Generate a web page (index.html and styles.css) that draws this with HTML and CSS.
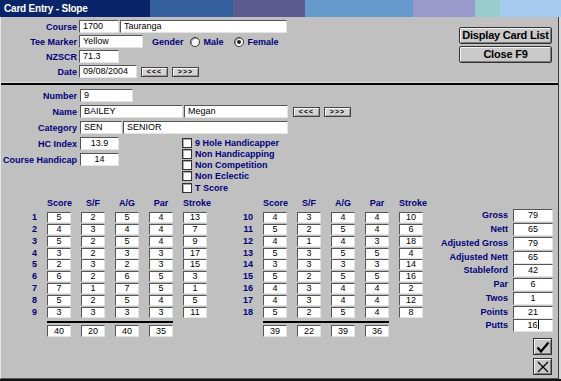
FILE: index.html
```html
<!DOCTYPE html>
<html>
<head>
    <link rel="stylesheet" href="styles.css">
</head>
<body>
<div class="window">
    <div class="titlebar">Card Entry - Slope</div>
    <div class="content">

        <div class="top">
            <div class="top-form">
                <div class="row">
                    <span class="lab">Course</span>
                    <span class="field" style="width:40px">1700</span>
                    <span class="field join" style="width:167px">Tauranga</span>
                </div>
                <div class="row">
                    <span class="lab">Tee Marker</span>
                    <span class="field" style="width:64px">Yellow</span>
                    <span class="opt gender">Gender</span>
                    <span class="radio"></span>
                    <span class="opt">Male</span>
                    <span class="radio on"></span>
                    <span class="opt">Female</span>
                </div>
                <div class="row">
                    <span class="lab">NZSCR</span>
                    <span class="field" style="width:40px">71.3</span>
                </div>
                <div class="row">
                    <span class="lab">Date</span>
                    <span class="field" style="width:58px">09/08/2004</span>
                    <span class="mini">&lt;&lt;&lt;</span>
                    <span class="mini">&gt;&gt;&gt;</span>
                </div>
            </div>
            <div class="top-buttons">
                <span class="btn">Display Card List</span>
                <span class="btn">Close F9</span>
            </div>
        </div>

        <div class="player">
            <div class="row">
                <span class="lab wide">Number</span>
                <span class="field" style="width:53px">9</span>
            </div>
            <div class="row">
                <span class="lab wide">Name</span>
                <span class="field" style="width:103px">BAILEY</span>
                <span class="field join" style="width:104px">Megan</span>
                <span class="mini name-btn">&lt;&lt;&lt;</span>
                <span class="mini">&gt;&gt;&gt;</span>
            </div>
            <div class="row">
                <span class="lab wide">Category</span>
                <span class="field" style="width:42px">SEN</span>
                <span class="field join" style="width:165px">SENIOR</span>
            </div>
            <div class="hc-block">
                <div class="hc-rows">
                    <div class="row">
                        <span class="lab wide">HC Index</span>
                        <span class="field center" style="width:39px">13.9</span>
                    </div>
                    <div class="row">
                        <span class="lab wide">Course Handicap</span>
                        <span class="field center" style="width:39px">14</span>
                    </div>
                </div>
                <div class="checks">
                    <div class="check"><span class="cbox"></span>9 Hole Handicapper</div>
                    <div class="check"><span class="cbox"></span>Non Handicapping</div>
                    <div class="check"><span class="cbox"></span>Non Competition</div>
                    <div class="check"><span class="cbox"></span>Non Eclectic</div>
                    <div class="check"><span class="cbox"></span>T Score</div>
                </div>
            </div>
        </div>

        <div class="scores">
            <div class="card">
                <span></span><span class="hd">Score</span><span class="hd">S/F</span><span class="hd">A/G</span><span class="hd">Par</span><span class="hd">Stroke</span>
                <span class="num">1</span><span class="box">5</span><span class="box">2</span><span class="box">5</span><span class="box">4</span><span class="box">13</span>
                <span class="num">2</span><span class="box">4</span><span class="box">3</span><span class="box">4</span><span class="box">4</span><span class="box">7</span>
                <span class="num">3</span><span class="box">5</span><span class="box">2</span><span class="box">5</span><span class="box">4</span><span class="box">9</span>
                <span class="num">4</span><span class="box">3</span><span class="box">2</span><span class="box">3</span><span class="box">3</span><span class="box">17</span>
                <span class="num">5</span><span class="box">2</span><span class="box">3</span><span class="box">2</span><span class="box">3</span><span class="box">15</span>
                <span class="num">6</span><span class="box">6</span><span class="box">2</span><span class="box">6</span><span class="box">5</span><span class="box">3</span>
                <span class="num">7</span><span class="box">7</span><span class="box">1</span><span class="box">7</span><span class="box">5</span><span class="box">1</span>
                <span class="num">8</span><span class="box">5</span><span class="box">2</span><span class="box">5</span><span class="box">4</span><span class="box">5</span>
                <span class="num">9</span><span class="box">3</span><span class="box">3</span><span class="box">3</span><span class="box">3</span><span class="box">11</span>
                <span class="rule"></span>
                <span class="box total first">40</span><span class="box total">20</span><span class="box total">40</span><span class="box total">35</span>
            </div>

            <div class="card back">
                <span></span><span class="hd">Score</span><span class="hd">S/F</span><span class="hd">A/G</span><span class="hd">Par</span><span class="hd">Stroke</span>
                <span class="num">10</span><span class="box">4</span><span class="box">3</span><span class="box">4</span><span class="box">4</span><span class="box">10</span>
                <span class="num">11</span><span class="box">5</span><span class="box">2</span><span class="box">5</span><span class="box">4</span><span class="box">6</span>
                <span class="num">12</span><span class="box">4</span><span class="box">1</span><span class="box">4</span><span class="box">3</span><span class="box">18</span>
                <span class="num">13</span><span class="box">5</span><span class="box">3</span><span class="box">5</span><span class="box">5</span><span class="box">4</span>
                <span class="num">14</span><span class="box">3</span><span class="box">3</span><span class="box">3</span><span class="box">3</span><span class="box">14</span>
                <span class="num">15</span><span class="box">5</span><span class="box">2</span><span class="box">5</span><span class="box">5</span><span class="box">16</span>
                <span class="num">16</span><span class="box">4</span><span class="box">3</span><span class="box">4</span><span class="box">4</span><span class="box">2</span>
                <span class="num">17</span><span class="box">4</span><span class="box">3</span><span class="box">4</span><span class="box">4</span><span class="box">12</span>
                <span class="num">18</span><span class="box">5</span><span class="box">2</span><span class="box">5</span><span class="box">4</span><span class="box">8</span>
                <span class="rule"></span>
                <span class="box total first">39</span><span class="box total">22</span><span class="box total">39</span><span class="box total">36</span>
            </div>

            <div class="summary">
                <div class="stats">
                    <span class="slab">Gross</span><span class="sval">79</span>
                    <span class="slab">Nett</span><span class="sval">65</span>
                    <span class="slab">Adjusted Gross</span><span class="sval">79</span>
                    <span class="slab">Adjusted Nett</span><span class="sval">65</span>
                    <span class="slab">Stableford</span><span class="sval">42</span>
                    <span class="slab">Par</span><span class="sval">6</span>
                    <span class="slab">Twos</span><span class="sval">1</span>
                    <span class="slab">Points</span><span class="sval">21</span>
                    <span class="slab">Putts</span><span class="sval">16<span class="caret"></span></span>
                </div>
                <div class="actions">
                    <span class="icon-btn">
                        <svg width="14" height="12" viewBox="0 0 14 12"><path d="M1.5 6.5 L5 10.5 L12.5 1.5" fill="none" stroke="#000" stroke-width="2.2"/></svg>
                    </span>
                    <span class="icon-btn">
                        <svg width="12" height="12" viewBox="0 0 12 12"><path d="M1 1 L11 11 M11 1 L1 11" fill="none" stroke="#000" stroke-width="1.3"/></svg>
                    </span>
                </div>
            </div>
        </div>

    </div>
</div>
</body>
</html>
```

FILE: styles.css
```css
/* window frame */
* {
    box-sizing: border-box;
}

body {
    margin: 0;
    background: #d6d6d6;
    font-family: "Liberation Sans", Arial, sans-serif;
    font-size: 9px;
}

.window {
    width: 561px;
    height: 381px;
    display: flex;
    flex-direction: column;
    border-bottom: 2px solid #111;
}

.titlebar {
    height: 17px;
    padding: 1px 4px 0;
    line-height: 16px;
    color: #fff;
    font-size: 10px;
    font-weight: bold;
    letter-spacing: -0.2px;
    background: linear-gradient(to right,
        #0a246a 0 150px,
        #33609c 150px 233px,
        #5b5b90 233px 305px,
        #6699cc 305px 413px,
        #9999cc 413px 475px,
        #99cccc 475px 500px,
        #a6caf0 500px);
}

.content {
    flex: 1;
    margin-right: 2px;
    background: #c0c0c0;
    border-left: 1px solid #e6e6e6;
    border-right: 1px solid #3a3a3a;
    border-bottom: 1px solid #5a5a5a;
}

/* common controls */
.row {
    display: flex;
    align-items: center;
    height: 13px;
}

.lab {
    width: 76px;
    margin-right: 2px;
    text-align: right;
    font-weight: bold;
    color: #00007b;
    white-space: nowrap;
}

.lab.wide {
    margin-right: 3px;
}

.field {
    height: 13px;
    padding: 0 3px;
    line-height: 11px;
    background: #fff;
    border: 1px solid;
    border-color: #555 #e4e4e4 #e4e4e4 #555;
    white-space: nowrap;
    overflow: hidden;
}

.field.join {
    margin-left: 1px;
}

.field.center {
    text-align: center;
}

.opt {
    font-weight: bold;
    color: #00007b;
    margin-left: 4px;
    margin-right: 10px;
}

.opt.gender {
    margin-left: 9px;
    margin-right: 6px;
}

.radio {
    width: 10px;
    height: 10px;
    border-radius: 50%;
    border: 1px solid #333;
    background: #fff;
    box-shadow: inset 1px 1px 0 #9a9a9a;
    position: relative;
}

.radio.on::after {
    content: "";
    position: absolute;
    left: 2px;
    top: 2px;
    width: 4px;
    height: 4px;
    border-radius: 50%;
    background: #222;
}

.mini {
    height: 10px;
    width: 27px;
    margin-left: 4px;
    font-size: 7px;
    font-weight: bold;
    letter-spacing: 1px;
    line-height: 8px;
    text-align: center;
    background: #d4d4d4;
    border: 1px solid #444;
    box-shadow: inset 1px 1px 0 #fff, inset -1px -1px 0 #999;
}

.mini.name-btn {
    margin-left: 5px;
}

/* top part */
.top {
    height: 68px;
    display: flex;
    justify-content: space-between;
    border-bottom: 2px solid #000;
    box-shadow: inset 0 -3px 0 -2px #e2e2e2;
}

.top-form {
    padding-top: 3px;
    display: flex;
    flex-direction: column;
    gap: 2px;
}

.top-buttons {
    padding-top: 10px;
    margin-right: 6px;
    display: flex;
    flex-direction: column;
    gap: 2px;
}

.btn {
    width: 93px;
    height: 17px;
    line-height: 15px;
    text-align: center;
    font-size: 11px;
    font-weight: bold;
    letter-spacing: -0.2px;
    background: #c9c9c9;
    border: 1px solid #333;
    border-radius: 2px;
    box-shadow: inset 1px 1px 0 #f4f4f4, inset -1px -1px 0 #7c7c7c;
}

/* player part */
.player {
    padding-top: 4px;
    display: flex;
    flex-direction: column;
    gap: 3px;
}

.hc-block {
    display: flex;
}

.hc-rows {
    width: 181px;
    display: flex;
    flex-direction: column;
    gap: 3px;
}

.check {
    display: flex;
    align-items: center;
    height: 11.25px;
    font-weight: bold;
    color: #00007b;
}

.cbox {
    width: 10px;
    height: 10px;
    margin-right: 3px;
    background: #fff;
    border: 1px solid #333;
    box-shadow: inset 1px 1px 0 #aaa;
}

/* score cards */
.scores {
    display: flex;
    align-items: flex-start;
    margin-top: 4px;
    padding-left: 24px;
}

.card {
    display: grid;
    grid-template-columns: 12px repeat(5, 24px);
    grid-template-rows: 15px repeat(9, 11.8px) 7px 12px;
    column-gap: 10px;
    width: 182px;
}

.card.back {
    margin-left: 34px;
}

.hd {
    text-align: center;
    font-weight: bold;
    color: #00007b;
    line-height: 12px;
    white-space: nowrap;
}

.num {
    text-align: right;
    font-weight: bold;
    color: #00007b;
    line-height: 11px;
}

.box {
    height: 11px;
    line-height: 9px;
    text-align: center;
    background: #fff;
    border: 1px solid;
    border-color: #555 #e4e4e4 #e4e4e4 #555;
}

.box.total {
    height: 12px;
    line-height: 10px;
}

.box.first {
    grid-column: 2;
}

.rule {
    grid-column: 2 / 6;
    align-self: center;
    height: 2px;
    background: #000;
}

/* totals panel */
.summary {
    width: 130px;
    padding-top: 12px;
}

.stats {
    display: grid;
    grid-template-columns: 1fr 40px;
    grid-auto-rows: 13px;
    row-gap: 0.75px;
    column-gap: 5px;
}

.slab {
    text-align: right;
    font-weight: bold;
    color: #00007b;
    line-height: 13px;
    white-space: nowrap;
}

.sval {
    height: 13px;
    line-height: 11px;
    text-align: center;
    background: #fff;
    border: 1px solid;
    border-color: #555 #e4e4e4 #e4e4e4 #555;
}

.caret {
    display: inline-block;
    width: 1px;
    height: 9px;
    background: #000;
    vertical-align: -1px;
}

.actions {
    margin-top: 6px;
    display: flex;
    flex-direction: column;
    align-items: flex-end;
    gap: 3px;
    padding-right: 1px;
}

.icon-btn {
    width: 19px;
    height: 17px;
    display: flex;
    align-items: center;
    justify-content: center;
    background: #c9c9c9;
    border: 1px solid #333;
    box-shadow: inset 1px 1px 0 #f4f4f4, inset -1px -1px 0 #7c7c7c;
}
```
